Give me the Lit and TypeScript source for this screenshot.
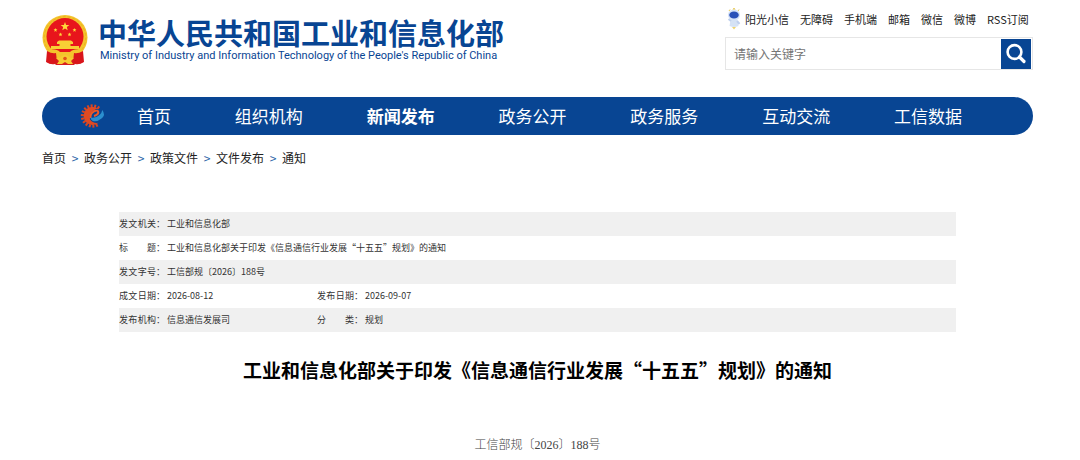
import { LitElement, html, css, svg } from "lit";
import { customElement } from "lit/decorators.js";

const TEETH = [65, 85, 105, 125, 145, 165, 185, 205, 225, 245, 265, 285, 305];

@customElement("site-emblem")
class SiteEmblem extends LitElement {
  static styles = css`
    :host { display: block; }
    svg { display: block; width: 46px; height: 52px; }
  `;
  star(x: number, y: number, r: number) {
    const pts = Array.from({ length: 10 }, (_, i) => {
      const rad = i % 2 ? r * 0.42 : r;
      const a = (Math.PI / 5) * i - Math.PI / 2;
      return `${(x + rad * Math.cos(a)).toFixed(2)},${(y + rad * Math.sin(a)).toFixed(2)}`;
    }).join(" ");
    return svg`<polygon points=${pts} fill="#ffd83a" />`;
  }
  render() {
    return html`
      <svg viewBox="0 0 46 52" role="img" aria-label="国徽">
        <path d="M6 34 L5 48 Q8 51 13 50 L14 51 H32 L33 50 Q38 51 41 48 L40 34 Z" fill="#d81e1e" />
        <circle cx="23" cy="23.500" r="22.500" fill="#f4c42c" />
        <circle cx="23" cy="23.500" r="20.800" fill="none" stroke="#eab022" stroke-width="1" stroke-dasharray="3 2" />
        <circle cx="23" cy="22.500" r="18.500" fill="#e8151c" />
        ${this.star(23, 12.5, 4.6)} ${this.star(13.5, 16, 2.1)} ${this.star(32.5, 16, 2.1)}
        ${this.star(18.5, 20.5, 2.1)} ${this.star(27.5, 20.5, 2.1)}
        <path d="M15 28 L17 26.500 H29 L31 28 V30 H28.500 V32 H37 V35 H9 V32 H17.500 V30 H15 Z" fill="#f8cf35" />
        <path d="M5 36 Q14 34 18 38 H28 Q32 34 41 36 L37 43 H30 L28 41 H18 L16 43 H9 Z" fill="#f4c42c" />
        <path d="M5 37 Q10 40 14 39 L15 48 Q9 51 4 48 Z M41 37 Q36 40 32 39 L31 48 Q37 51 42 48 Z" fill="#d9151b" />
        <path d="M18.500 43 Q23 39 27.500 43 L32 44 L29 47 L31 50 H26 L23 48 L20 50 H15 L17 47 L14 44 Z" fill="#f7cb31" />
        <circle cx="23" cy="44.500" r="1.800" fill="#e2551b" />
      </svg>
    `;
  }
}

@customElement("app-root")
class AppRoot extends LitElement {
  static styles = css`
    :host {
      display: block;
      background: #fff;
      color: #222;
      font-family: "Noto Sans CJK SC", "Noto Sans", sans-serif;
    }
    * { box-sizing: border-box; }
    a { color: inherit; text-decoration: none; }
    .page { padding: 0 47px 0 42px; }
    .top {
      display: flex;
      justify-content: space-between;
      align-items: flex-start;
      height: 97px;
    }
    .brand { display: flex; align-items: flex-start; gap: 10px; padding-top: 14px; }
    .names { display: flex; flex-direction: column; color: #084593; white-space: nowrap; }
    .cn { font-size: 29px; line-height: 36px; font-weight: 700; }
    .en { font-family: Roboto, "Noto Sans", sans-serif; font-size: 11px; line-height: 12px; padding-left: 2px; }
    .tools { width: 308px; padding-top: 8px; }
    .links {
      display: flex;
      align-items: center;
      gap: 11px;
      height: 22px;
      padding-left: 2px;
      font-size: 11px;
      white-space: nowrap;
    }
    .links a { display: flex; align-items: center; gap: 4px; }
    .mascot { width: 14px; height: 22px; display: block; }
    .search {
      display: flex;
      align-items: center;
      margin-top: 7px;
      height: 33px;
      border: 1px solid #e6e6e6;
      padding-right: 1px;
    }
    .search input {
      flex: 1;
      min-width: 0;
      height: 100%;
      border: 0;
      outline: 0;
      padding: 0 8px;
      background: transparent;
      font: inherit;
      font-size: 12px;
    }
    .search input::placeholder { color: #757575; opacity: 1; }
    .search button {
      width: 30px;
      height: 30px;
      padding: 0;
      border: 0;
      background: #084593;
      display: grid;
      place-items: center;
    }
    .nav {
      display: flex;
      align-items: center;
      height: 38px;
      border-radius: 19px;
      background: #084593;
      color: #fff;
      padding: 0 71px 0 38px;
      gap: 31px;
    }
    .gear { width: 26px; height: 26px; flex: none; }
    .nav ul {
      flex: 1;
      display: flex;
      justify-content: space-between;
      list-style: none;
      margin: 0;
      padding: 0;
      font-size: 17px;
      line-height: 24px;
      white-space: nowrap;
    }
    .current { font-weight: 700; }
    .crumbs {
      display: flex;
      gap: 5px;
      padding-top: 14px;
      font-size: 12px;
      line-height: 18px;
    }
    .crumbs span { width: 8px; text-align: center; color: #2c66a8; }
    .meta {
      width: calc(100% - 154px);
      margin: 45px 77px 0;
      border-collapse: collapse;
      table-layout: fixed;
      font-size: 9px;
      line-height: 14px;
      color: #333;
    }
    .meta tr { height: 24px; }
    .meta tr:nth-child(odd) { background: #f0f0f0; }
    .meta th, .meta td { padding: 0; text-align: left; font-weight: 400; white-space: nowrap; }
    .label { width: 48px; }
    .value { width: 150px; }
    .pair { display: flex; }
    .pair b { font-weight: 400; width: 37px; display: flex; justify-content: space-between; }
    h1 {
      margin: 24px 0 0;
      text-align: center;
      font-size: 19px;
      line-height: 28px;
      font-weight: 700;
      color: #000;
    }
    .number {
      margin: 51px 0 0;
      text-align: center;
      font-family: "Liberation Serif", "Noto Sans CJK SC", serif;
      font-size: 12px;
      line-height: 20px;
      font-weight: 300;
      color: #444;
    }
  `;

  links = ["无障碍", "手机端", "邮箱", "微信", "微博", "RSS订阅"];
  menu = ["首页", "组织机构", "新闻发布", "政务公开", "政务服务", "互动交流", "工信数据"];
  path = ["首页", "政务公开", "政策文件", "文件发布", "通知"];
  rows = [
    ["发文机关", "工业和信息化部"],
    ["标题", "工业和信息化部关于印发《信息通信行业发展“十五五”规划》的通知"],
    ["发文字号", "工信部规〔2026〕188号"],
    ["成文日期", "2026-08-12", "发布日期", "2026-09-07"],
    ["发布机构", "信息通信发展司", "分类", "规划"],
  ];

  label(text: string) {
    return html`<th scope="row"><div class="pair"><b>${[...text].map((c) => html`<span>${c}</span>`)}</b>：</div></th>`;
  }

  render() {
    return html`
      <div class="page">
        <header class="top">
          <div class="brand">
            <site-emblem></site-emblem>
            <div class="names">
              <span class="cn">中华人民共和国工业和信息化部</span>
              <span class="en">Ministry of Industry and Information Technology of the People's Republic of China</span>
            </div>
          </div>
          <div class="tools">
            <div class="links">
              <a href="#">
                <svg class="mascot" viewBox="0 0 14 22" aria-hidden="true">
                  <path d="M6 2 L7 0 L8 2 M2 3 L3 1.500 M11 3 L12 1.500" stroke="#e9c84d" fill="none" />
                  <ellipse cx="7" cy="7" rx="6" ry="5.500" fill="#d5e2f8" />
                  <ellipse cx="7" cy="7" rx="4.800" ry="3.500" fill="#2950b8" />
                  <path d="M3.500 12 H10.500 L11.500 18 Q7 20 2.500 18 Z" fill="#d5e2f5" />
                  <path d="M4 13 L1.500 11 M10 13 L12.500 16" stroke="#bfd0ee" stroke-width="2" />
                  <path d="M5 19 L7 21.500 L9 19 Z" fill="#ecd372" />
                </svg>
                阳光小信
              </a>
              ${this.links.map((t) => html`<a href="#">${t}</a>`)}
            </div>
            <form class="search" @submit=${(e: Event) => e.preventDefault()}>
              <input type="text" placeholder="请输入关键字" aria-label="请输入关键字" />
              <button type="submit" aria-label="搜索">
                <svg width="22" height="22" viewBox="0 0 22 22" fill="none" stroke="#fff">
                  <circle cx="9.500" cy="9" r="6.900" stroke-width="2.600" />
                  <path d="M14.500 14 L19 18.500" stroke-width="3.200" stroke-linecap="round" />
                </svg>
              </button>
            </form>
          </div>
        </header>

        <nav class="nav" aria-label="主导航">
          <svg class="gear" viewBox="0 0 26 26" aria-hidden="true" fill="none">
            <g fill="#dc4520">
              ${TEETH.map(
                (a) => svg`<rect x="21" y="12" width="3.200" height="2" transform="rotate(${a} 12.500 13)" />`
              )}
            </g>
            <path d="M17.500 5.300 A9 9 0 1 0 18.500 19.800 Q12.500 20.500 10 16.500 Q7.500 10 17.500 5.300 Z" fill="#e04a22" />
            <path d="M10.500 15 Q10 10.500 14 8.300 Q18.500 6.500 18.300 9.500 Q17.800 12 14 13" stroke="#ee5a28" stroke-width="2" />
            <path d="M10.500 14.500 Q16 15.500 19.500 12 Q22 9.500 22.300 7 Q26 12 21.500 15.500 Q16.500 19.500 12.500 17.800 Q10.800 16.800 10.500 14.500 Z" fill="#2b8fce" />
          </svg>
          <ul>
            ${this.menu.map((t) => html`<li><a href="#" class=${t === "新闻发布" ? "current" : ""}>${t}</a></li>`)}
          </ul>
        </nav>

        <nav class="crumbs" aria-label="当前位置">
          ${this.path.map((t, i) => html`${i ? html`<span>&gt;</span>` : ""}<a href="#">${t}</a>`)}
        </nav>

        <main>
          <table class="meta">
            <colgroup><col class="label" /><col class="value" /><col class="label" /><col /></colgroup>
            <tbody>
              ${this.rows.map(
                (r) => html`<tr>
                  ${this.label(r[0])}
                  <td colspan=${r.length > 2 ? 1 : 3}>${r[1]}</td>
                  ${r.length > 2 ? html`${this.label(r[2])}<td>${r[3]}</td>` : ""}
                </tr>`
              )}
            </tbody>
          </table>
          <h1>工业和信息化部关于印发《信息通信行业发展“十五五”规划》的通知</h1>
          <p class="number">工信部规〔2026〕188号</p>
        </main>
      </div>
    `;
  }
}
